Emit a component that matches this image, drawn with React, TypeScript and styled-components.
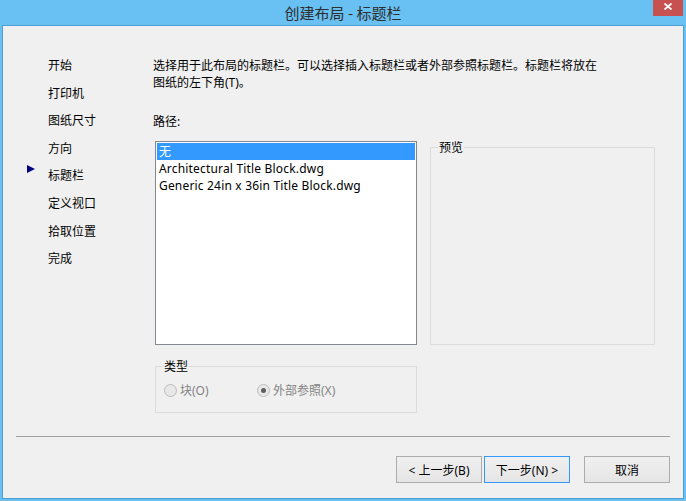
import React from "react";
import styled, { createGlobalStyle } from "styled-components";

const FONT = `"Noto Sans", "Noto Sans CJK SC", sans-serif`;

const GlobalStyle = createGlobalStyle`
  html, body { margin: 0; padding: 0; background: #69c0f2; overflow: hidden; }
  body { font-family: ${FONT}; }
  * { box-sizing: border-box; }
`;

const Window = styled.div`
  width: 686px;
  height: 501px;
  display: flex;
  flex-direction: column;
  background: #69c0f2;
  padding: 0 2px 2px;
  font-family: ${FONT};
  font-size: 12px;
  color: #000;
`;

const TitleBar = styled.div`
  height: 25px;
  flex: none;
  display: grid;
  grid-template-columns: 1fr auto 1fr;
  align-items: start;
`;

const Title = styled.div`
  grid-column: 2;
  font-size: 15px;
  line-height: 25px;
  color: #2d2d2d;
  white-space: nowrap;
  font-family: "Noto Sans CJK SC", "Noto Sans", sans-serif;
`;

const CloseButton = styled.div`
  grid-column: 3;
  justify-self: end;
  width: 30px;
  height: 16px;
  margin-right: 1px;
  background: #c75050;
  display: flex;
  align-items: flex-start;
  justify-content: center;
  padding-top: 3px;
`;

const Panel = styled.div`
  flex: 1;
  display: flex;
  flex-direction: column;
  background: #f0f0f0;
  border: 1px solid #4f9fd3;
`;

const Body = styled.div`
  flex: 1;
  display: flex;
  padding-top: 31px;
`;

const Sidebar = styled.ul`
  width: 150px;
  flex: none;
  margin: 0;
  padding: 0 0 0 24px;
  list-style: none;
  display: flex;
  flex-direction: column;
  gap: 10.6px;
`;

const StepItem = styled.li`
  display: grid;
  grid-template-columns: 21px 1fr;
  align-items: start;
  line-height: 17px;
  height: 17px;
`;

const StepArrow = styled.svg`
  display: block;
  margin-top: -2px;
`;

const Content = styled.div`
  flex: 1;
  display: flex;
  flex-direction: column;
`;

const Intro = styled.p`
  margin: 0;
  line-height: 17px;
`;

const FieldLabel = styled.div`
  margin-top: 22px;
  line-height: 17px;
`;

const ListRow = styled.div`
  margin-top: 11px;
  padding-left: 2px;
  display: flex;
  align-items: flex-start;
  gap: 13px;
`;

const ListBox = styled.div`
  width: 262px;
  height: 204px;
  border: 1px solid #828790;
  background: #fff;
  padding: 1px;
`;

const ListItem = styled.div<{ $selected?: boolean }>`
  height: 17px;
  line-height: 17px;
  padding-left: 2px;
  letter-spacing: 0.18px;
  white-space: nowrap;
  background: ${(p) => (p.$selected ? "#3399ff" : "transparent")};
  color: ${(p) => (p.$selected ? "#fff" : "#000")};
`;

const GroupBox = styled.div<{ $w: number; $h: number; $top: number }>`
  position: relative;
  width: ${(p) => p.$w}px;
  height: ${(p) => p.$h}px;
  margin-top: ${(p) => p.$top}px;
  border: 1px solid #dcdcdc;
`;

const Legend = styled.span`
  position: absolute;
  top: -8px;
  left: 7px;
  padding: 0 1px;
  line-height: 15px;
  background: #f0f0f0;
  color: #000;
`;

const TypeGroup = styled(GroupBox)`
  margin-left: 2px;
  padding: 17px 0 0 8px;
  display: flex;
  align-items: flex-start;
`;

const RadioOption = styled.label<{ $w?: number }>`
  display: flex;
  align-items: center;
  gap: 3px;
  height: 13px;
  width: ${(p) => (p.$w ? `${p.$w}px` : "auto")};
  color: #838383;
  line-height: 13px;
`;

const RadioCircle = styled.span<{ $checked?: boolean }>`
  width: 13px;
  height: 13px;
  flex: none;
  border-radius: 50%;
  border: 1px solid #bcbcbc;
  background: #e8e8e8;
  display: flex;
  align-items: center;
  justify-content: center;
  &::after {
    content: "";
    width: 5px;
    height: 5px;
    border-radius: 50%;
    background: ${(p) => (p.$checked ? "#5f5f5f" : "transparent")};
  }
`;

const Footer = styled.div`
  flex: none;
  display: flex;
  flex-direction: column;
`;

const Separator = styled.div`
  height: 1px;
  margin: 0 13px;
  background: #a0a0a0;
`;

const ButtonRow = styled.div`
  display: flex;
  justify-content: flex-end;
  gap: 2px;
  padding: 19px 13px 15px;
`;

const Button = styled.button<{ $default?: boolean; $spaced?: boolean }>`
  width: 86px;
  height: 27px;
  margin: 0 0 0 ${(p) => (p.$spaced ? "12px" : "0")};
  padding: 0;
  font-family: ${FONT};
  font-size: 12px;
  color: #000;
  background: linear-gradient(#f0f0f0, #e5e5e5);
  border: 1px solid ${(p) => (p.$default ? "#3399ff" : "#acacac")};
  border-radius: 0;
  white-space: nowrap;
`;

const steps = ["开始", "打印机", "图纸尺寸", "方向", "标题栏", "定义视口", "拾取位置", "完成"];
const current = 4;

export default function App() {
  return (
    <>
      <GlobalStyle />
      <Window>
        <TitleBar>
          <Title>创建布局 - 标题栏</Title>
          <CloseButton>
            <svg width="8" height="7" viewBox="0 0 8 7">
              <path d="M0.5 0.5 L7.5 6.5 M7.5 0.5 L0.5 6.5" stroke="#fff" strokeWidth="1.8" />
            </svg>
          </CloseButton>
        </TitleBar>
        <Panel>
          <Body>
            <Sidebar>
              {steps.map((s, i) => (
                <StepItem key={s}>
                  {i === current ? (
                    <StepArrow width="8" height="8" viewBox="0 0 8 8">
                      <path d="M0 0 L8 4 L0 8 Z" fill="#000080" />
                    </StepArrow>
                  ) : (
                    <span />
                  )}
                  <span>{s}</span>
                </StepItem>
              ))}
            </Sidebar>
            <Content>
              <Intro>
                选择用于此布局的标题栏。可以选择插入标题栏或者外部参照标题栏。标题栏将放在
                <br />
                图纸的左下角(T)。
              </Intro>
              <FieldLabel>路径:</FieldLabel>
              <ListRow>
                <ListBox>
                  <ListItem $selected>无</ListItem>
                  <ListItem>Architectural Title Block.dwg</ListItem>
                  <ListItem>Generic 24in x 36in Title Block.dwg</ListItem>
                </ListBox>
                <GroupBox $w={225} $h={198} $top={6}>
                  <Legend>预览</Legend>
                </GroupBox>
              </ListRow>
              <TypeGroup $w={262} $h={47} $top={21}>
                <Legend>类型</Legend>
                <RadioOption $w={93}>
                  <RadioCircle />
                  块(O)
                </RadioOption>
                <RadioOption>
                  <RadioCircle $checked />
                  外部参照(X)
                </RadioOption>
              </TypeGroup>
            </Content>
          </Body>
          <Footer>
            <Separator />
            <ButtonRow>
              <Button>&lt; 上一步(B)</Button>
              <Button $default>下一步(N) &gt;</Button>
              <Button $spaced>取消</Button>
            </ButtonRow>
          </Footer>
        </Panel>
      </Window>
    </>
  );
}
